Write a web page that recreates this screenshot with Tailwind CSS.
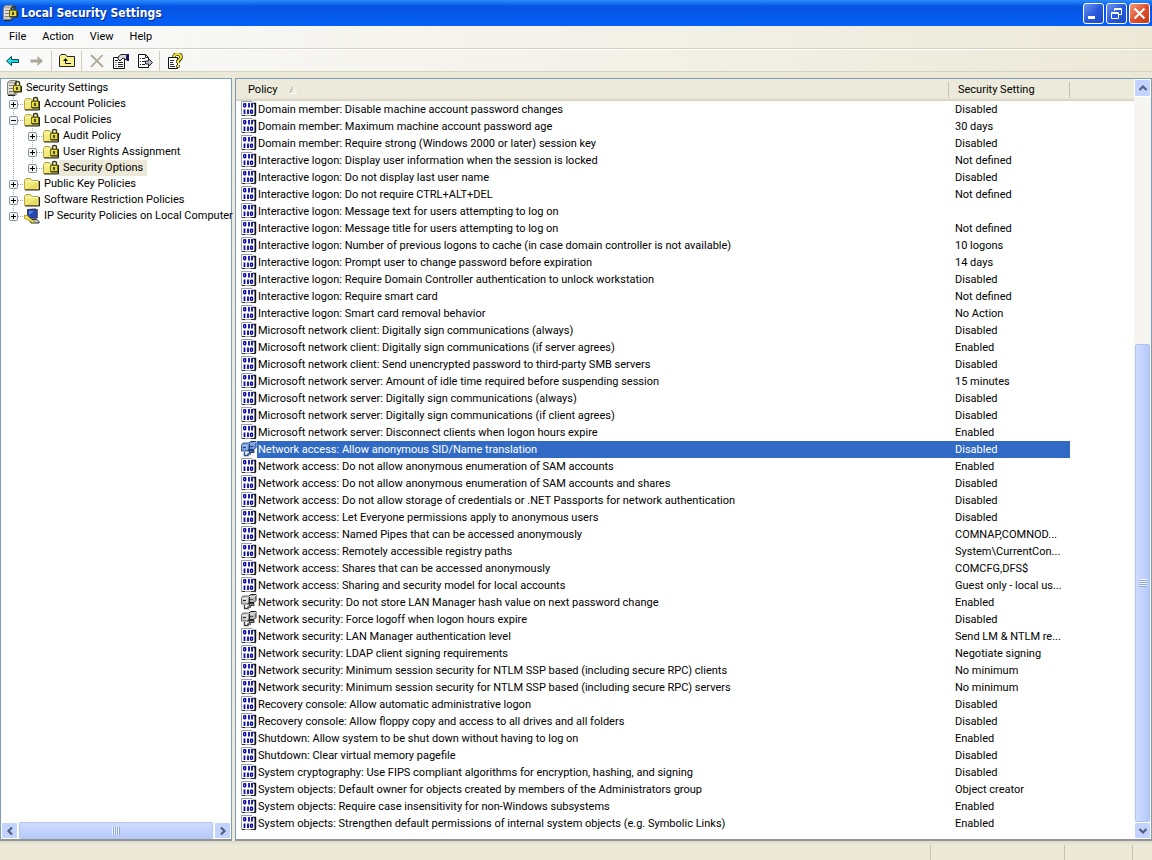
<!DOCTYPE html>
<html lang="en">
<head>
  <meta charset="UTF-8" />
  <meta name="viewport" content="width=device-width, initial-scale=1.0" />
  <title>Local Security Settings</title>
  <script src="https://cdn.jsdelivr.net/npm/@tailwindcss/browser@4"></script>
</head>
<body class="bg-[#ece9d8] text-black text-[11px] leading-4 font-['Tahoma','Roboto',sans-serif]">

  <!-- Shared icons -->
  <svg class="hidden" aria-hidden="true">
    <symbol id="lock" viewBox="0 0 16 16">
      <path d="M9.500 6V3q0-1.500 2-1.500t2 1.500v3" fill="none" stroke="#3a3a10" stroke-width="1.400" />
      <rect x="7.500" y="5.500" width="7" height="6" fill="#e3dc3c" stroke="#6d671a" />
      <path d="M8 12h7.500V6" fill="none" stroke="#222" />
      <path d="M11 7v3" stroke="#222" stroke-width="1.600" />
    </symbol>
    <symbol id="folder" viewBox="0 0 16 16">
      <path d="M.5 13.500V4.500L2 2.500h4.500L8 4.500h6.500v9z" fill="#f2ea7c" stroke="#b5a94c" />
      <path d="M1.500 5.500h12" stroke="#fffcc8" />
      <path d="M1 14h14.500V5" fill="none" stroke="#222" />
      <path d="M3 13L13 6v7z" fill="#e0d450" opacity=".6" />
    </symbol>
    <symbol id="folder-lock" viewBox="0 0 16 16">
      <use href="#folder" /><use href="#lock" />
    </symbol>
    <symbol id="server" viewBox="0 0 16 16">
      <path d="M1.500 14.500v-12l2-2h7v12l-2 2z" fill="#d3d0c6" stroke="#8a887e" />
      <path d="M1.500 3h7v11M3 5.500h4M3 8.500h4M3 11.500h4" fill="none" stroke="#807e76" />
      <path d="M2 4h6M2 7h6M2 10h6" stroke="#f5f3ec" />
      <path d="M2 15.500h7l2-2" fill="none" stroke="#222" />
      <use href="#lock" />
    </symbol>
    <symbol id="computer" viewBox="0 0 16 16">
      <path d="M3.500 1.500l8-1 1 1v8h-9z" fill="#2447b8" stroke="#999aa6" />
      <path d="M5 3l3-.5-3 4z" fill="#6f95ea" />
      <path d="M13 1v9H4M5 11.500h8l2 2v1.500H7z" fill="#c8c6bb" stroke="#2c2c36" />
      <path d="M13 1.500V10H3.500V1.500z" fill="#2447b8" stroke="#333a5a" />
      <path d="M5 3h5l-5 4z" fill="#5d85e4" />
      <path d="M.5 7l3 .5 2 2.500 5 3.500-1.500 1.500-5-3-3.500-1.500z" fill="#f4e744" stroke="#8a8018" stroke-width=".7" />
    </symbol>
    <symbol id="policy" viewBox="0 0 16 16">
      <path d="M.5 14.500V.5h10.500l2.500 2.500v11.500z" fill="#fff" stroke="#9a9fb8" />
      <path d="M1 14.500h3M10 14.500h3.500" stroke="#333" />
      <path d="M12.500 2.500h2v11l-1 1.500" fill="none" stroke="#111" stroke-width="1.400" />
      <g fill="none" stroke="#0a0aa8" stroke-width="1.400">
        <rect x="2.700" y="2.700" width="2" height="3" rx=".7" />
        <path d="M8 2v4.500M11 2v4.500M3.500 8.500V13M7 8.500V13" stroke-width="1.800" />
        <rect x="9.500" y="9.200" width="2" height="3" rx=".7" />
      </g>
    </symbol>
    <symbol id="machines" viewBox="0 0 16 16">
      <path d="M7.500 2.500l2-2h5.500v6l-2 2H8z" fill="#b5b5b5" stroke="#222" />
      <path d="M8 3h5l2-2" fill="none" stroke="#eee" />
      <path d="M9 5.500h3" stroke="#555" />
      <path d="M8 9.500h5v2H8z" fill="#999" stroke="#333" />
      <path d="M.5 4l1.500-2h6v6l-2 2H.5z" fill="#c6c6c6" stroke="#666" />
      <path d="M1 4.500h5l2-2M6 5v4" fill="none" stroke="#f4f4f4" />
      <path d="M8.500 3v5.500l-2 2M2 6.500h3" fill="none" stroke="#222" />
      <path d="M3.500 11v3.500H7V13h3" fill="none" stroke="#444" stroke-width="1.400" />
    </symbol>
    <symbol id="machines-selected" viewBox="0 0 16 16">
      <path d="M7.500 2.500l2-2h5.500v6l-2 2H8z" fill="#6f95d6" stroke="#1c3f78" />
      <path d="M8 3h5l2-2" fill="none" stroke="#9dbcf0" />
      <path d="M9 5.500h3" stroke="#2d558f" />
      <path d="M8 9.500h5v2H8z" fill="#5077b8" stroke="#1c3f78" />
      <path d="M.5 4l1.500-2h6v6l-2 2H.5z" fill="#7a9edb" stroke="#37609f" />
      <path d="M1 4.500h5l2-2M6 5v4" fill="none" stroke="#aac5f2" />
      <path d="M8.500 3v5.500l-2 2M2 6.500h3" fill="none" stroke="#1c3f78" />
      <path d="M3.500 11v3.500H7V13h3" fill="none" stroke="#2b5290" stroke-width="1.400" />
    </symbol>
    <symbol id="chevron" viewBox="0 0 10 10">
      <path d="M1.500 7L5 3.500 8.500 7" fill="none" stroke="#4d6185" stroke-width="2.200" />
    </symbol>
  </svg>

  <div class="min-h-screen flex flex-col">
    <!-- Title bar -->
    <header class="h-[26px] flex items-center pl-[2px] pr-[2px] bg-linear-to-b from-[#2a8bff] via-[#0553e2] via-25% to-[#0560f6]">
      <svg class="w-4 h-4 mr-[3px]"><use href="#server" /></svg>
      <h1 class="flex-1 text-white text-[12px] font-bold [text-shadow:1px_1px_#0a2a80] font-['Trebuchet_MS','DejaVu_Sans_Condensed',sans-serif]">Local Security Settings</h1>
      <div class="flex gap-[2px]">
        <button aria-label="Minimize" class="w-[21px] h-[21px] rounded-[3px] border border-white bg-linear-to-br from-[#6f93ee] via-[#2a5bdc] to-[#1c48c4]">
          <svg class="w-[19px] h-[19px]" viewBox="0 0 19 19"><path d="M4 13.500h7" stroke="#fff" stroke-width="3" /></svg>
        </button>
        <button aria-label="Restore" class="w-[21px] h-[21px] rounded-[3px] border border-white bg-linear-to-br from-[#6f93ee] via-[#2a5bdc] to-[#1c48c4]">
          <svg class="w-[19px] h-[19px]" viewBox="0 0 19 19" fill="none" stroke="#fff"><path d="M7.500 7V4.500h7v6H12M7 5.500h8M4.500 8.500h7v6h-7zM4 9.500h8" /></svg>
        </button>
        <button aria-label="Close" class="w-[21px] h-[21px] rounded-[3px] border border-white bg-linear-to-br from-[#f09a80] via-[#e0502c] to-[#c43a14]">
          <svg class="w-[19px] h-[19px]" viewBox="0 0 19 19"><path d="M4.500 4.500l10 10M14.500 4.500l-10 10" stroke="#fff" stroke-width="2.200" /></svg>
        </button>
      </div>
    </header>

    <!-- Menu bar -->
    <nav class="h-[23px] flex items-center gap-4 pl-[9px] border-b border-[#d5d2c2] bg-linear-to-r from-[#fafafa] via-[#f3f2ea] to-[#ece9d8]">
      <button>File</button>
      <button>Action</button>
      <button>View</button>
      <button>Help</button>
    </nav>

    <!-- Toolbar -->
    <div class="h-[23px] flex items-center gap-2 pl-[5px] border-t border-white border-b border-b-[#d5d2c2] bg-linear-to-r from-[#fafafa] via-[#f3f2ea] to-[#ece9d8]">
      <button aria-label="Back"><svg class="w-4 h-4" viewBox="0 0 16 16"><path d="M1.500 8L6.500 3.500v3h7v3h-7v3z" fill="#27d7e4" stroke="#074a56" /></svg></button>
      <button aria-label="Forward"><svg class="w-4 h-4" viewBox="0 0 16 16"><path d="M14 8L8.500 3v3.500H1.500v3h7V13z" fill="#aca899" /></svg></button>
      <span class="w-px h-5 -ml-0.5 -mr-px bg-[#d0cdbb]"></span>
      <button aria-label="Up one level"><svg class="w-4 h-4" viewBox="0 0 16 16"><path d="M.5 13.500v-10L2 1.500h4.500l1.500 2h7.500v10z" fill="#f9f28a" stroke="#222" /><path d="M4 8l2.500-3L9 8z" fill="#111" /><path d="M6.500 7v3.500H12" fill="none" stroke="#111" /></svg></button>
      <span class="w-px h-5 -ml-0.5 -mr-px bg-[#d0cdbb]"></span>
      <button aria-label="Delete"><svg class="w-4 h-4" viewBox="0 0 16 16"><path d="M2 2l12 12M13.500 2L2 14" stroke="#aca899" stroke-width="1.800" /></svg></button>
      <button aria-label="Properties"><svg class="w-4 h-4" viewBox="0 0 16 16"><path d="M.5 4.500h11v11H.5z" fill="#fff" stroke="#111" /><path d="M2 7.500h3M2.500 9.500h1M5 9.500h5M2.500 11.500h1M5 11.500h5M2.500 13.500h1M5 13.500h5" stroke="#222" /><path d="M5 4l3-2.500h5.500V7L10 5 7 8 5 6z" fill="#d5d5dd" stroke="#222" /><path d="M14 1h2v7h-2z" fill="#16167c" /></svg></button>
      <button aria-label="Export list"><svg class="w-4 h-4" viewBox="0 0 16 16"><path d="M1.500 14.500V1.500h7l3 3v10z" fill="#fff" stroke="#111" /><path d="M8.500 1.500v3h3M3 5.500h1M5 5.500h3M3 8.500h1M5 8.500h3M3 11.500h1M5 11.500h3" fill="none" stroke="#222" /><path d="M8.500 8h3V5.500L15.500 9.500l-4 4V11h-3z" fill="#bcbcc8" stroke="#222" /></svg></button>
      <span class="w-px h-5 -ml-0.5 -mr-px bg-[#d0cdbb]"></span>
      <button aria-label="Help"><svg class="w-4 h-4" viewBox="0 0 16 16"><path d="M1.500 4.500h9v11h-9z" fill="#fff" stroke="#111" /><path d="M3 7.500h4M3 9.500h3M3 11.500h4M3 13.500h5" stroke="#333" /><path d="M7 4q0-3 3.500-3T14 4q0 2-3 4v2M11 12v2.500" fill="none" stroke="#33300a" stroke-width="3.600" /><path d="M7 4q0-3 3.500-3T14 4q0 2-3 4v2M11 12v2" fill="none" stroke="#f6ea2c" stroke-width="2" /></svg></button>
    </div>

    <main class="flex-1 flex pt-1.5">
      <!-- Console tree -->
      <aside class="w-[232px] shrink-0 flex flex-col justify-between bg-white border border-[#7f9db9] border-b-2 border-b-[#8f9499]">
        <ul id="tree" class="pl-[3px] pt-px"></ul>
        <div class="h-[17px] flex gap-px bg-[#f6f5ef]">
          <button aria-label="Scroll left" class="w-[17px] flex items-center justify-center rounded-[2px] border border-white bg-[#c3d3fd]"><svg class="w-2.5 h-2.5 -rotate-90"><use href="#chevron" /></svg></button>
          <div class="flex-1 flex items-center justify-center rounded-[2px] border border-[#b2c5f0] bg-linear-to-b from-[#cfdcff] to-[#b7c9f9]">
            <span class="w-2 h-2 bg-[repeating-linear-gradient(90deg,#eef3ff_0_1px,#8fa9e4_1px_2px)]"></span>
          </div>
          <button aria-label="Scroll right" class="w-[17px] flex items-center justify-center rounded-[2px] border border-white bg-[#c3d3fd]"><svg class="w-2.5 h-2.5 rotate-90"><use href="#chevron" /></svg></button>
        </div>
      </aside>

      <!-- Policy list -->
      <section class="flex-1 ml-[3px] flex bg-white border border-[#7f9db9] border-b-2 border-b-[#8f9499]">
        <div class="flex-1">
          <table class="w-full table-fixed border-collapse text-left">
            <thead>
              <tr class="h-[22px] bg-linear-to-b from-[#ebeadb] from-85% to-[#d3cfbd]">
                <th class="w-[713px] p-0 font-normal">
                  <div class="h-4 flex items-center pl-3 border-r border-[#c7c5b2]">Policy
                    <svg class="w-2 h-2 ml-3" viewBox="0 0 8 8" fill="none"><path d="M.5 7.500L4 .5" stroke="#aca899" /><path d="M4 .5l3.500 7H0" stroke="#fff" /></svg>
                  </div>
                </th>
                <th class="w-[121px] p-0 font-normal"><div class="pl-[9px] border-r border-[#c7c5b2]">Security Setting</div></th>
                <th class="p-0"></th>
              </tr>
            </thead>
            <tbody id="policies"></tbody>
          </table>
        </div>
        <div class="w-[17px] flex flex-col bg-[#f6f5ef]">
          <button aria-label="Scroll up" class="h-[18px] flex items-center justify-center rounded-[2px] border border-white bg-[#c3d3fd]"><svg class="w-2.5 h-2.5"><use href="#chevron" /></svg></button>
          <div class="flex-1 flex flex-col justify-end">
            <div class="h-[66%] flex items-center justify-center mx-px rounded-[2px] border border-[#b2c5f0] bg-linear-to-r from-[#cfdcff] to-[#b7c9f9]">
              <span class="w-2 h-2 bg-[repeating-linear-gradient(180deg,#eef3ff_0_1px,#8fa9e4_1px_2px)]"></span>
            </div>
          </div>
          <button aria-label="Scroll down" class="h-[17px] flex items-center justify-center rounded-[2px] border border-white bg-[#c3d3fd]"><svg class="w-2.5 h-2.5 rotate-180"><use href="#chevron" /></svg></button>
        </div>
      </section>
    </main>

    <!-- Status bar -->
    <footer class="h-[19px] flex justify-end pt-1 bg-linear-to-b from-[#dedbcb] to-[#ece9d8] to-25%">
      <span class="w-[134px] border-l border-[#c7c5b2]"></span>
      <span class="w-[68px] border-l border-[#c7c5b2]"></span>
      <span class="w-5 border-l border-[#c7c5b2]"></span>
    </footer>
  </div>

  <script>
    // depth, icon, label, sign of the expand box
    const nodes = [
      [0, 'server', 'Security Settings', ''],
      [1, 'folder-lock', 'Account Policies', '+'],
      [1, 'folder-lock', 'Local Policies', '-'],
      [2, 'folder-lock', 'Audit Policy', '+'],
      [2, 'folder-lock', 'User Rights Assignment', '+'],
      [2, 'folder-lock', 'Security Options', '+'],
      [1, 'folder', 'Public Key Policies', '+'],
      [1, 'folder', 'Software Restriction Policies', '+'],
      [1, 'computer', 'IP Security Policies on Local Computer', '+']
    ];

    const policies = [
      ['Domain member: Disable machine account password changes', 'Disabled'],
      ['Domain member: Maximum machine account password age', '30 days'],
      ['Domain member: Require strong (Windows 2000 or later) session key', 'Disabled'],
      ['Interactive logon: Display user information when the session is locked', 'Not defined'],
      ['Interactive logon: Do not display last user name', 'Disabled'],
      ['Interactive logon: Do not require CTRL+ALT+DEL', 'Not defined'],
      ['Interactive logon: Message text for users attempting to log on', ''],
      ['Interactive logon: Message title for users attempting to log on', 'Not defined'],
      ['Interactive logon: Number of previous logons to cache (in case domain controller is not available)', '10 logons'],
      ['Interactive logon: Prompt user to change password before expiration', '14 days'],
      ['Interactive logon: Require Domain Controller authentication to unlock workstation', 'Disabled'],
      ['Interactive logon: Require smart card', 'Not defined'],
      ['Interactive logon: Smart card removal behavior', 'No Action'],
      ['Microsoft network client: Digitally sign communications (always)', 'Disabled'],
      ['Microsoft network client: Digitally sign communications (if server agrees)', 'Enabled'],
      ['Microsoft network client: Send unencrypted password to third-party SMB servers', 'Disabled'],
      ['Microsoft network server: Amount of idle time required before suspending session', '15 minutes'],
      ['Microsoft network server: Digitally sign communications (always)', 'Disabled'],
      ['Microsoft network server: Digitally sign communications (if client agrees)', 'Disabled'],
      ['Microsoft network server: Disconnect clients when logon hours expire', 'Enabled'],
      ['Network access: Allow anonymous SID/Name translation', 'Disabled', 'machines-selected'],
      ['Network access: Do not allow anonymous enumeration of SAM accounts', 'Enabled'],
      ['Network access: Do not allow anonymous enumeration of SAM accounts and shares', 'Disabled'],
      ['Network access: Do not allow storage of credentials or .NET Passports for network authentication', 'Disabled'],
      ['Network access: Let Everyone permissions apply to anonymous users', 'Disabled'],
      ['Network access: Named Pipes that can be accessed anonymously', 'COMNAP,COMNOD...'],
      ['Network access: Remotely accessible registry paths', 'System\\CurrentCon...'],
      ['Network access: Shares that can be accessed anonymously', 'COMCFG,DFS$'],
      ['Network access: Sharing and security model for local accounts', 'Guest only - local us...'],
      ['Network security: Do not store LAN Manager hash value on next password change', 'Enabled', 'machines'],
      ['Network security: Force logoff when logon hours expire', 'Disabled', 'machines'],
      ['Network security: LAN Manager authentication level', 'Send LM &amp; NTLM re...'],
      ['Network security: LDAP client signing requirements', 'Negotiate signing'],
      ['Network security: Minimum session security for NTLM SSP based (including secure RPC) clients', 'No minimum'],
      ['Network security: Minimum session security for NTLM SSP based (including secure RPC) servers', 'No minimum'],
      ['Recovery console: Allow automatic administrative logon', 'Disabled'],
      ['Recovery console: Allow floppy copy and access to all drives and all folders', 'Disabled'],
      ['Shutdown: Allow system to be shut down without having to log on', 'Enabled'],
      ['Shutdown: Clear virtual memory pagefile', 'Disabled'],
      ['System cryptography: Use FIPS compliant algorithms for encryption, hashing, and signing', 'Disabled'],
      ['System objects: Default owner for objects created by members of the Administrators group', 'Object creator'],
      ['System objects: Require case insensitivity for non-Windows subsystems', 'Enabled'],
      ['System objects: Strengthen default permissions of internal system objects (e.g. Symbolic Links)', 'Enabled']
    ];

    // Dotted guide lines of the tree
    const line = (d) => `<path d="${d}" stroke="#a8a8a8" stroke-dasharray="1 1" fill="none" />`;

    document.getElementById('tree').innerHTML = nodes.map(([depth, icon, label, sign], i) => {
      const last = i === nodes.length - 1;
      let guides = '';
      if (depth === 2) {
        guides += `<svg class="w-[19px] h-4 shrink-0">${line('M9.500 0v16')}</svg>`;
      }
      if (depth > 0) {
        const end = last || label === 'Security Options' ? 8 : 16;
        guides += `<button aria-label="Toggle ${label}" class="w-[19px] h-4 shrink-0"><svg class="w-[19px] h-4">
          ${line('M9.500 0v' + end)}${line('M10 8.500h9')}
          <rect x="5.500" y="4.500" width="8" height="8" rx="1" fill="#f4f3ee" stroke="#7b8ea8" />
          <path d="${sign === '+' ? 'M7 8.500h5M9.500 6v5' : 'M7 8.500h5'}" stroke="#000" /></svg></button>`;
      }
      const text = label === 'Security Options' ? 'px-1 bg-[#ece9d8]' : 'px-1';
      return `<li class="h-4 flex items-center whitespace-nowrap">${guides}
        <svg class="w-4 h-4 shrink-0 ${depth ? 'ml-px' : 'ml-[2px]'}"><use href="#${icon}" /></svg>
        <a href="#" class="${text}">${label}</a></li>`;
    }).join('');

    document.getElementById('policies').innerHTML = policies.map(([name, value, icon = 'policy']) => {
      const mark = icon === 'machines-selected' ? 'bg-[#316ac5] text-white' : '';
      return `<tr class="h-[17px] whitespace-nowrap">
        <td class="p-0"><div class="flex pl-[5px]">
          <svg class="w-4 h-4 shrink-0"><use href="#${icon}" /></svg>
          <span class="flex-1 h-[17px] leading-[17px] pl-px ${mark}">${name}</span></div></td>
        <td class="p-0"><div class="h-[17px] leading-[17px] pl-[6px] ${mark}">${value}</div></td>
        <td class="p-0"></td></tr>`;
    }).join('');
  </script>
</body>
</html>
